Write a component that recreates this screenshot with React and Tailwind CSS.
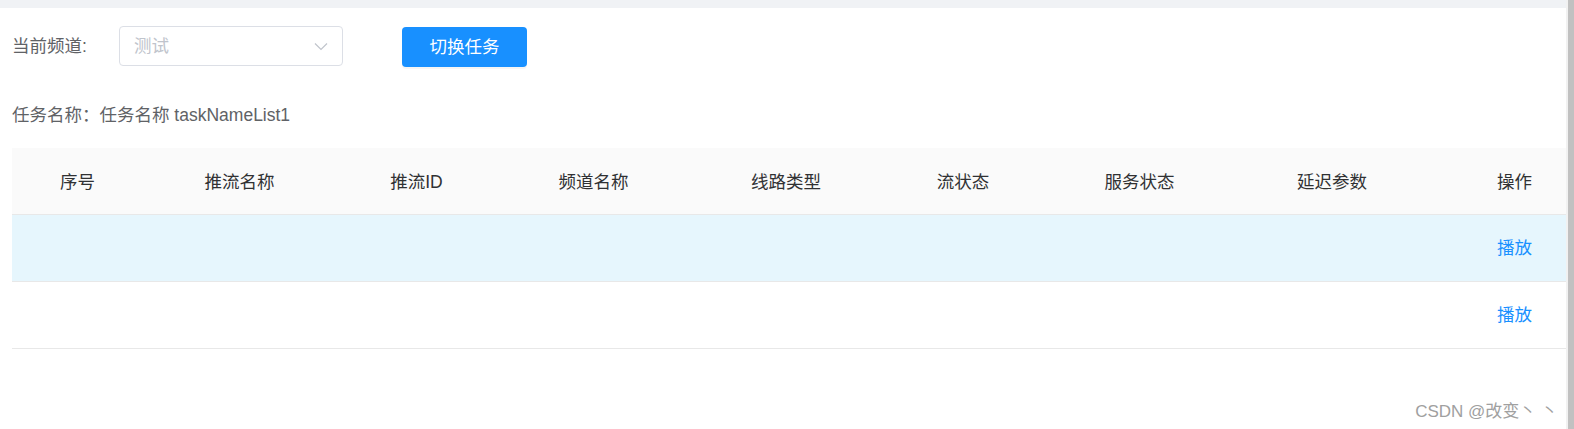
import React from "react";

const cols = [
  { t: "序号", w: "w-[131px]" },
  { t: "推流名称", w: "w-[193px]" },
  { t: "推流ID", w: "w-[161px]" },
  { t: "频道名称", w: "w-[193px]" },
  { t: "线路类型", w: "w-[192px]" },
  { t: "流状态", w: "w-[162px]" },
  { t: "服务状态", w: "w-[191px]" },
  { t: "延迟参数", w: "w-[194px]" },
];

function Row({ bg, children }) {
  return (
    <div className={`flex h-[67px] items-center border-b border-[#e8e8e8] ${bg}`}>
      {cols.map((c, i) => (
        <div key={i} className={`${c.w} shrink-0 text-center`} />
      ))}
      <div className="flex-1 pl-[34px] text-center">{children}</div>
    </div>
  );
}

export default function App() {
  return (
    <div
      className="relative flex h-[429px] w-[1574px] overflow-hidden bg-white text-[17.5px]"
      style={{ fontFamily: "'Liberation Sans', 'Noto Sans CJK SC', sans-serif" }}
    >
      <div className="flex-1">
        <div className="h-2 bg-[#f0f2f5]" />
        <div className="pl-3">
          <div className="mt-[17px] flex items-center">
            <span className="w-[107px] text-[#606266]">当前频道:</span>
            <div className="flex h-10 w-[224px] items-center justify-between rounded-[4px] border border-[#dcdfe6] pl-[14px] pr-[14px]">
              <span className="text-[#c0c4cc]">测试</span>
              <svg width="14" height="9" viewBox="0 0 14 9" fill="none">
                <path d="M1 1.5 L7 7.5 L13 1.5" stroke="#c0c4cc" strokeWidth="1.2" />
              </svg>
            </div>
            <button className="ml-[59px] mt-[2px] h-10 w-[125px] rounded-[4px] bg-[#1890ff] text-white shadow-[0_2px_0_rgba(0,0,0,0.04)]">
              切换任务
            </button>
          </div>
          <div className="mt-[35px] leading-[26px] text-[#606266]">任务名称：任务名称 taskNameList1</div>
          <div className="mt-[20px] text-[#303133]">
            <div className="flex h-[67px] items-center border-b border-[#e8e8e8] bg-[#fafafa] pt-[2px]">
              {cols.map((c, i) => (
                <div key={i} className={`${c.w} shrink-0 text-center`}>
                  {c.t}
                </div>
              ))}
              <div className="flex-1 pl-[34px] text-center">操作</div>
            </div>
            <Row bg="bg-[#e6f6fd]">
              <span className="text-[#1890ff]">播放</span>
            </Row>
            <Row bg="bg-white">
              <span className="text-[#1890ff]">播放</span>
            </Row>
          </div>
        </div>
      </div>
      <div className="flex w-2 shrink-0">
        <div className="w-[2px] bg-[#f1f1f1]" />
        <div className="flex-1 bg-[#c1c1c1]" />
      </div>
      <div className="absolute bottom-[5px] right-[16px] text-[17px] text-[#a0a0a0]">
        CSDN @改变丶 丶
      </div>
    </div>
  );
}
